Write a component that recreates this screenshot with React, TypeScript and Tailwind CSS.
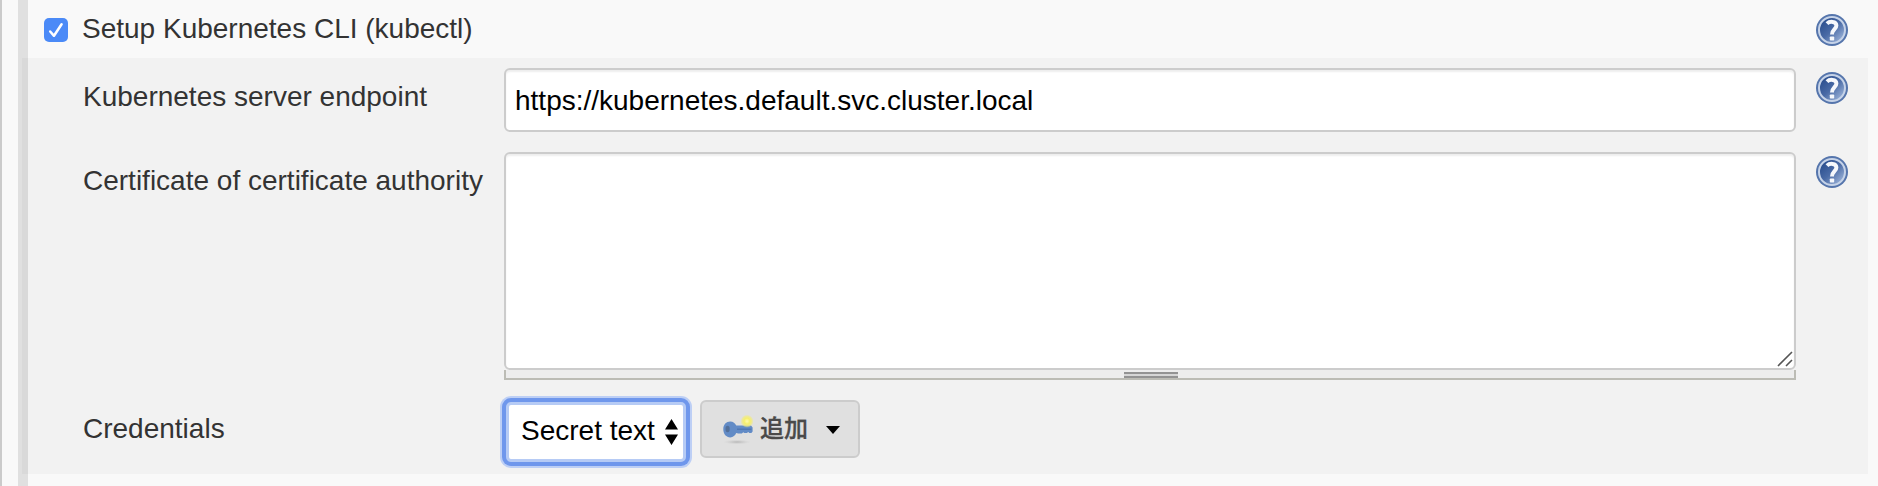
import React from "react";

function HelpIcon({ id }: { id: string }) {
  return (
    <svg width="32" height="32" viewBox="0 0 32 32" className="block shrink-0" aria-label="Help">
      <defs>
        <linearGradient id={id} x1="0" y1="0" x2="1" y2="1">
          <stop offset="0.15" stopColor="#2c4f8f" />
          <stop offset="0.5" stopColor="#4a6ba6" />
          <stop offset="0.9" stopColor="#9db4da" />
        </linearGradient>
      </defs>
      <circle cx="16" cy="16" r="16" fill="#5575ac" />
      <circle cx="16" cy="16" r="13" fill={`url(#${id})`} stroke="#c6d3e8" strokeWidth="2" />
      <path
        d="M11 9.6 C13.4 7.2 20.4 6.8 20.4 11.6 C20.4 15.2 16 15.4 16 20.6"
        fill="none"
        stroke="#f6f8fc"
        strokeWidth="4"
      />
      <rect x="13.8" y="22.4" width="4.4" height="4.2" rx="0.8" fill="#f6f8fc" />
    </svg>
  );
}

function KeyIcon() {
  return (
    <svg width="32" height="32" viewBox="0 0 32 32" className="block shrink-0">
      <defs>
        <radialGradient id="glow">
          <stop offset="0" stopColor="#fffbb0" />
          <stop offset="0.45" stopColor="#f6ef6c" />
          <stop offset="0.75" stopColor="#f3ec7a" stopOpacity="0.7" />
          <stop offset="1" stopColor="#f3ec7a" stopOpacity="0" />
        </radialGradient>
        <radialGradient id="shade">
          <stop offset="0" stopColor="#aaa" stopOpacity="0.8" />
          <stop offset="1" stopColor="#ccc" stopOpacity="0" />
        </radialGradient>
      </defs>
      <ellipse cx="16" cy="29" rx="14" ry="2.4" fill="url(#shade)" />
      <path
        d="M2.3 16.2 C2.3 11.4 5.3 8.4 9.2 8.4 C12.2 8.4 14.2 10.2 15.2 12.5 L30 12.5 L31.6 14.5 V18.4 L30.4 20 H28.3 L27.3 19 L25.8 20 H23.3 L22.3 19.2 L20.8 20.4 H17.2 L15.2 20 C14.2 22.4 12.2 24.4 9.2 24.4 C5.3 24.4 2.3 21 2.3 16.2 Z"
        fill="#628bc6"
      />
      <path d="M16 16.2 H30.4" stroke="#5077b2" strokeWidth="1.4" />
      <ellipse cx="6.6" cy="16" rx="2.1" ry="3.2" fill="#526f99" />
      <circle cx="26" cy="8.2" r="6.6" fill="url(#glow)" />
    </svg>
  );
}

export default function App() {
  return (
    <div className="flex h-[486px] w-[1878px] overflow-hidden border-l-2 border-[#cbcbcb] bg-[#f9f9f9] pl-4 font-['Liberation_Sans','Noto_Sans_CJK_JP',sans-serif] text-[28px] leading-[30px] text-[#333]">
      <div className="flex w-[10px] shrink-0 flex-col bg-[#e0e0e0] pt-[58px] pl-1">
        <div className="h-[416px] bg-[#d9d9d9]" />
      </div>
      <main className="w-[1840px] shrink-0">
        <header className="flex h-[58px] items-start pl-4">
          <span className="mt-[18px] flex size-6 items-center justify-center rounded-[5px] bg-[#4b8af7]">
            <svg width="24" height="24" viewBox="0 0 24 24" fill="none" stroke="#fff" strokeWidth="2.5" strokeLinecap="round" strokeLinejoin="round">
              <path d="M6.2 13.5 L10 17.8 L17.6 6.2" />
            </svg>
          </span>
          <span className="mt-[14px] ml-[14px] whitespace-nowrap">Setup Kubernetes CLI (kubectl)</span>
          <span className="mt-[14px] mr-[20px] ml-auto">
            <HelpIcon id="help-cli" />
          </span>
        </header>
        <section className="h-[416px] bg-[#f2f2f2] pl-[55px]">
          <div className="flex h-[84px] items-start">
            <label className="w-[421px] pt-[24px] whitespace-nowrap">Kubernetes server endpoint</label>
            <div className="mt-[10px] flex h-16 w-[1292px] items-center rounded-[6px] border-2 border-[#ccc] bg-white pt-[2px] pl-[9px] text-black shadow-[inset_0_2px_2px_rgba(0,0,0,0.07)]">
              https://kubernetes.default.svc.cluster.local
            </div>
            <span className="mt-[14px] ml-5">
              <HelpIcon id="help-endpoint" />
            </span>
          </div>
          <div className="flex h-[248px] items-start">
            <label className="w-[421px] pt-[24px] whitespace-nowrap">Certificate of certificate authority</label>
            <div className="mt-[10px] w-[1292px]">
              <div className="flex h-[218px] items-end justify-end rounded-[6px] border-2 border-[#ccc] bg-white pr-[1px] pb-[1px] shadow-[inset_0_2px_2px_rgba(0,0,0,0.07)]">
                <svg width="16" height="16" viewBox="0 0 16 16" stroke="#555" strokeWidth="1.6">
                  <path d="M1 15 L15 1 M9 15 L15 9" />
                </svg>
              </div>
              <div className="flex h-[10px] justify-center border-x-2 border-b-2 border-[#bcbcb5] bg-[#ededed] pt-[2px] pl-[2px]">
                <div className="h-[6px] w-[54px] border-y-2 border-[#939393] bg-[#d6d6d6]" />
              </div>
            </div>
            <span className="mt-[14px] ml-5">
              <HelpIcon id="help-cert" />
            </span>
          </div>
          <div className="flex items-start">
            <label className="w-[423px] pt-[24px] whitespace-nowrap">Credentials</label>
            <div className="mt-[12px] flex h-[60px] w-[180px] items-center rounded-[5px] border-3 border-[#b6cbf5] bg-white pl-[12px] text-black shadow-[0_0_0_4px_#6f97ec,0_0_0_6px_#bdcff5]">
              <span className="w-[144px] pb-[2px] whitespace-nowrap">Secret text</span>
              <svg width="13" height="26" viewBox="0 0 13 26" className="shrink-0">
                <path d="M0 10.5 L6.5 0 L13 10.5 Z M0 15.5 L6.5 26 L13 15.5 Z" fill="#000" />
              </svg>
            </div>
            <div className="mt-[10px] ml-[14px] flex h-[58px] w-40 items-center rounded-[6px] border-2 border-[#ccc] bg-[#e0e0e0] pl-[19px]">
              <KeyIcon />
              <span className="ml-[7px] pb-[5px] font-['Noto_Sans_CJK_JP',sans-serif] text-[24px] font-medium text-[#4a4a4a] [-webkit-text-stroke:0.3px_#4a4a4a]">追加</span>
              <svg width="14" height="8" viewBox="0 0 14 8" className="mt-[2px] ml-[18px]">
                <path d="M0 0 H14 L7 8 Z" fill="#000" />
              </svg>
            </div>
          </div>
        </section>
      </main>
    </div>
  );
}
